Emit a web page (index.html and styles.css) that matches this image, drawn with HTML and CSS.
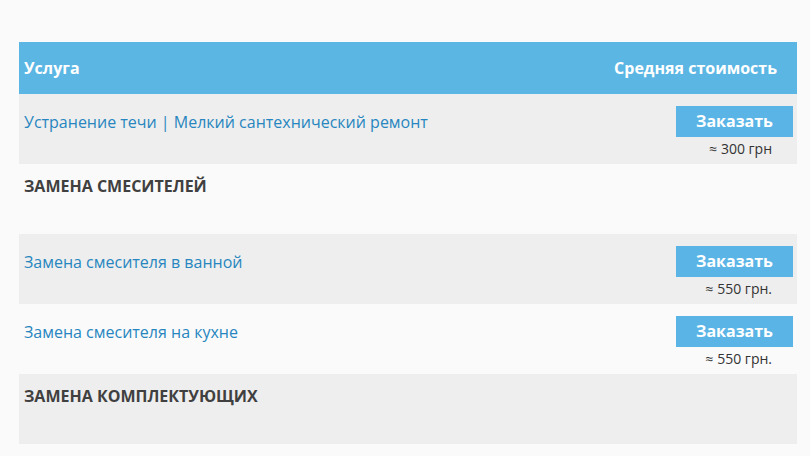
FILE: index.html
```html
<!DOCTYPE html>
<html lang="ru">
<head>
<meta charset="utf-8">
<link rel="stylesheet" href="styles.css">
</head>
<body>
<div class="wrap">
  <div class="head">
    <span>Услуга</span>
    <span>Средняя стоимость</span>
  </div>
  <div class="row item gray">
    <a class="name" href="#">Устранение течи | Мелкий сантехнический ремонт</a>
    <div class="order">
      <span class="btn">Заказать</span>
      <span class="price">≈ 300 грн</span>
    </div>
  </div>
  <div class="row section">
    <span class="title">ЗАМЕНА СМЕСИТЕЛЕЙ</span>
  </div>
  <div class="row item gray">
    <a class="name" href="#">Замена смесителя в ванной</a>
    <div class="order">
      <span class="btn">Заказать</span>
      <span class="price">≈ 550 грн.</span>
    </div>
  </div>
  <div class="row item">
    <a class="name" href="#">Замена смесителя на кухне</a>
    <div class="order">
      <span class="btn">Заказать</span>
      <span class="price">≈ 550 грн.</span>
    </div>
  </div>
  <div class="row section gray">
    <span class="title">ЗАМЕНА КОМПЛЕКТУЮЩИХ</span>
  </div>
</div>
</body>
</html>
```

FILE: styles.css
```css
html, body {
  margin: 0;
  padding: 0;
  background: #fafafa;
  font-family: "Open Sans", "Noto Sans", sans-serif;
}
.wrap {
  padding: 42px 13px 0 19px;
}
.head {
  height: 52px;
  background: #5bb6e4;
  color: #fff;
  font-weight: 700;
  font-size: 16px;
  display: flex;
  justify-content: space-between;
  align-items: center;
  padding: 0 20px 0 5px;
}
.row {
  height: 70px;
  box-sizing: border-box;
}
.gray {
  background: #eeeeee;
}
.item {
  display: flex;
  justify-content: space-between;
  align-items: flex-start;
  padding: 12px 4px 0 5px;
}
.name {
  margin-top: 6px;
  font-size: 16px;
  line-height: 20px;
  color: #2786bf;
  text-decoration: none;
}
.order {
  display: flex;
  flex-direction: column;
  align-items: flex-end;
}
.btn {
  width: 117px;
  height: 31px;
  background: #5ab5e6;
  color: #fff;
  font-weight: 700;
  font-size: 16px;
  line-height: 31px;
  text-align: center;
}
.price {
  margin-top: 2px;
  margin-right: 21px;
  font-size: 14px;
  line-height: 19px;
  color: #333;
}
.section {
  padding: 11px 5px 0 5px;
}
.title {
  font-weight: 700;
  font-size: 16px;
  line-height: 20px;
  color: #404040;
}
```
